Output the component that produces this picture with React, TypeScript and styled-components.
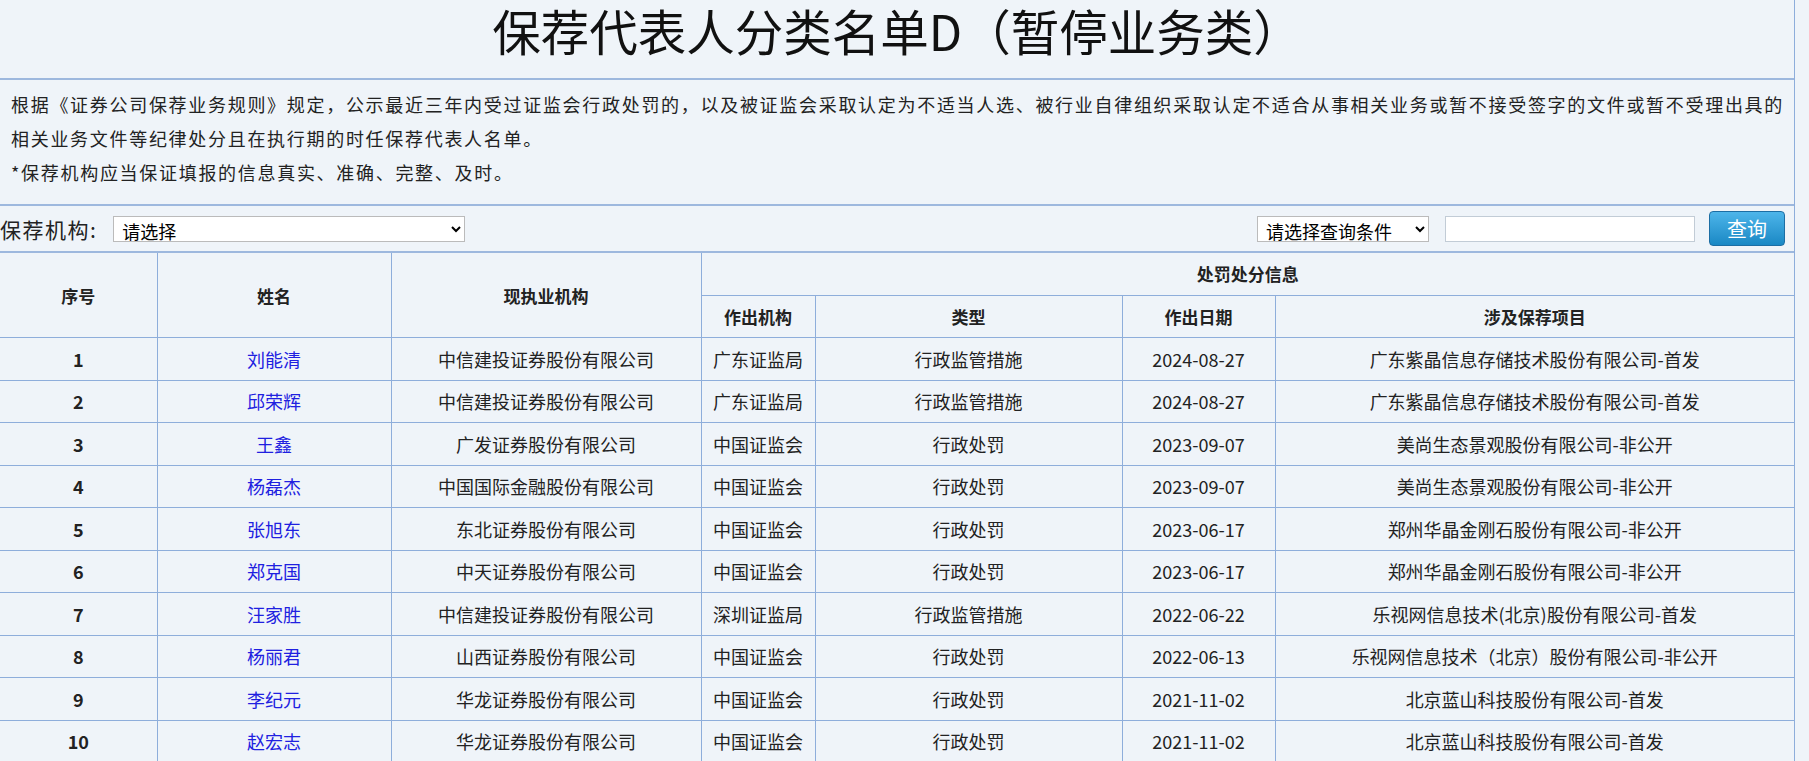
import React from 'react';
import styled, { createGlobalStyle } from 'styled-components';

const Global = createGlobalStyle`
  html, body { margin: 0; padding: 0; background: #eff4f9; }
  body { font-family: "Microsoft YaHei", "Noto Sans CJK SC", sans-serif; color: #222; }
`;

const Page = styled.div`
  width: 1794px;
  border-right: 1px solid #8eaedb;
  background: #eff4f9;
`;

const Title = styled.h1`
  margin: 0;
  height: 78px;
  border-bottom: 2px solid #9db8de;
  text-align: center;
  font-size: 48.5px;
  font-weight: normal;
  line-height: 60px;
  color: #111;
`;

const Notice = styled.div`
  height: 126px;
  padding: 7px 0 0 11px;
  border-bottom: 2px solid #9db8de;
  font-size: 18px;
  letter-spacing: 1.7px;
  line-height: 34px;
  box-sizing: border-box;
`;

const Filters = styled.div`
  height: 45px;
  display: flex;
  align-items: center;
  border-bottom: 2px solid #9db8de;
`;

const Label = styled.span`
  font-size: 21px;
  letter-spacing: 1.5px;
  margin-right: 16px;
`;

const Select = styled.select<{ $w: number }>`
  width: ${p => p.$w}px;
  height: 26px;
  font-size: 18px;
  font-family: inherit;
  border: 1px solid #bbb;
  background: #fff;
  padding: 0 4px;
`;

const Spacer = styled.div`
  flex: 1;
`;

const Input = styled.input`
  width: 250px;
  height: 26px;
  margin-left: 16px;
  border: 1px solid #c2ccd6;
  box-sizing: border-box;
`;

const Button = styled.button`
  margin-left: 14px;
  margin-right: 9px;
  width: 76px;
  height: 35px;
  border: 1px solid #1c6ea4;
  border-radius: 4px;
  background: linear-gradient(#4db5ea, #1a88c4);
  color: #fff;
  font-size: 20px;
  font-family: inherit;
`;

const Table = styled.table`
  width: 100%;
  border-collapse: collapse;
  font-size: 18px;
  td, th {
    border: 1px solid #8eaedb;
    text-align: center;
    height: 41.5px;
    padding: 0;
  }
  th { font-size: 17px; font-weight: bold; }
  tr > :first-child { border-left: none; }
  tr > :last-child { border-right: none; }
  thead tr:first-child th { border-top: none; }
`;

const NameLink = styled.a`
  color: #2020e0;
  text-decoration: none;
`;

const rows = [
  ['刘能清', '中信建投证券股份有限公司', '广东证监局', '行政监管措施', '2024-08-27', '广东紫晶信息存储技术股份有限公司-首发'],
  ['邱荣辉', '中信建投证券股份有限公司', '广东证监局', '行政监管措施', '2024-08-27', '广东紫晶信息存储技术股份有限公司-首发'],
  ['王鑫', '广发证券股份有限公司', '中国证监会', '行政处罚', '2023-09-07', '美尚生态景观股份有限公司-非公开'],
  ['杨磊杰', '中国国际金融股份有限公司', '中国证监会', '行政处罚', '2023-09-07', '美尚生态景观股份有限公司-非公开'],
  ['张旭东', '东北证券股份有限公司', '中国证监会', '行政处罚', '2023-06-17', '郑州华晶金刚石股份有限公司-非公开'],
  ['郑克国', '中天证券股份有限公司', '中国证监会', '行政处罚', '2023-06-17', '郑州华晶金刚石股份有限公司-非公开'],
  ['汪家胜', '中信建投证券股份有限公司', '深圳证监局', '行政监管措施', '2022-06-22', '乐视网信息技术(北京)股份有限公司-首发'],
  ['杨丽君', '山西证券股份有限公司', '中国证监会', '行政处罚', '2022-06-13', '乐视网信息技术（北京）股份有限公司-非公开'],
  ['李纪元', '华龙证券股份有限公司', '中国证监会', '行政处罚', '2021-11-02', '北京蓝山科技股份有限公司-首发'],
  ['赵宏志', '华龙证券股份有限公司', '中国证监会', '行政处罚', '2021-11-02', '北京蓝山科技股份有限公司-首发'],
];

export default function App() {
  return (
    <Page>
      <Global />
      <Title>保荐代表人分类名单D（暂停业务类）</Title>
      <Notice>
        <div>根据《证券公司保荐业务规则》规定，公示最近三年内受过证监会行政处罚的，以及被证监会采取认定为不适当人选、被行业自律组织采取认定不适合从事相关业务或暂不接受签字的文件或暂不受理出具的</div>
        <div>相关业务文件等纪律处分且在执行期的时任保荐代表人名单。</div>
        <div>*保荐机构应当保证填报的信息真实、准确、完整、及时。</div>
      </Notice>
      <Filters>
        <Label>保荐机构:</Label>
        <Select $w={352}><option>请选择</option></Select>
        <Spacer />
        <Select $w={172}><option>请选择查询条件</option></Select>
        <Input />
        <Button>查询</Button>
      </Filters>
      <Table>
        <colgroup>
          <col style={{ width: 157 }} />
          <col style={{ width: 234 }} />
          <col style={{ width: 310 }} />
          <col style={{ width: 114 }} />
          <col style={{ width: 307 }} />
          <col style={{ width: 153 }} />
          <col />
        </colgroup>
        <thead>
          <tr>
            <th rowSpan={2}>序号</th>
            <th rowSpan={2}>姓名</th>
            <th rowSpan={2}>现执业机构</th>
            <th colSpan={4}>处罚处分信息</th>
          </tr>
          <tr>
            <th>作出机构</th>
            <th>类型</th>
            <th>作出日期</th>
            <th>涉及保荐项目</th>
          </tr>
        </thead>
        <tbody>
          {rows.map((r, i) => (
            <tr key={i}>
              <td><b>{i + 1}</b></td>
              <td><NameLink href="#">{r[0]}</NameLink></td>
              <td>{r[1]}</td>
              <td>{r[2]}</td>
              <td>{r[3]}</td>
              <td>{r[4]}</td>
              <td>{r[5]}</td>
            </tr>
          ))}
        </tbody>
      </Table>
    </Page>
  );
}
